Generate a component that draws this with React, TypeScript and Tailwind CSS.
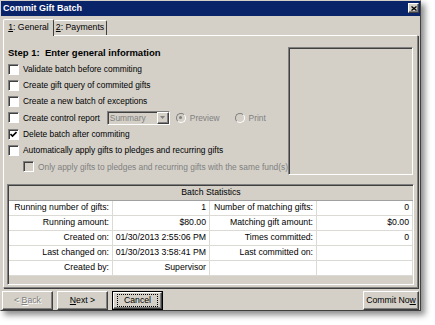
import React from "react";

const raised =
  "border border-t-white border-l-white border-r-[#404040] border-b-[#404040] shadow-[inset_-1px_-1px_0_#808080]";

function CheckBox({ checked, disabled }: { checked?: boolean; disabled?: boolean }) {
  return (
    <span
      className={`inline-flex w-[11px] h-[11px] shrink-0 items-center justify-center border border-t-[#808080] border-l-[#808080] border-r-white border-b-white shadow-[inset_1px_1px_0_#404040] ${
        disabled ? "bg-[#d4d0c8]" : "bg-white"
      }`}
    >
      {checked && (
        <svg width="7" height="7" viewBox="0 0 7 7">
          <path d="M0.5 3 L2.5 5 L6.5 1" stroke="#000" strokeWidth="1.6" fill="none" />
        </svg>
      )}
    </span>
  );
}

function Radio({ selected }: { selected?: boolean }) {
  return (
    <span className="inline-flex w-[10px] h-[10px] shrink-0 items-center justify-center rounded-full border border-t-[#808080] border-l-[#808080] border-r-white border-b-white bg-[#d4d0c8]">
      {selected && <span className="w-[3px] h-[3px] rounded-full bg-[#808080]" />}
    </span>
  );
}

function Row({ children, indent }: { children: React.ReactNode; indent?: boolean }) {
  return (
    <div
      className={`h-[16.3px] flex items-center gap-[4px] whitespace-nowrap ${indent ? "pl-[15px]" : ""}`}
    >
      {children}
    </div>
  );
}

type Stat = [string, string, string, string];

const stats: Stat[] = [
  ["Running number of gifts:", "1", "Number of matching gifts:", "0"],
  ["Running amount:", "$80.00", "Matching gift amount:", "$0.00"],
  ["Created on:", "01/30/2013 2:55:06 PM", "Times committed:", "0"],
  ["Last changed on:", "01/30/2013 3:58:41 PM", "Last committed on:", ""],
  ["Created by:", "Supervisor", "", ""],
];

function Button({
  children,
  width,
  isDefault,
}: {
  children: React.ReactNode;
  width: string;
  isDefault?: boolean;
}) {
  if (isDefault) {
    return (
      <div className={`${width} h-[19px] border border-black`}>
        <div className={`h-full ${raised} flex items-center justify-center text-[8.7px]`}>
          <span className="border border-dotted border-black px-[6px] leading-[11px]">{children}</span>
        </div>
      </div>
    );
  }
  return (
    <div className={`${width} h-[19px] ${raised} flex items-center justify-center text-[8.7px]`}>
      {children}
    </div>
  );
}

export default function App() {
  return (
    <div className="w-[435px] h-[325px] bg-white font-['Liberation_Sans',Arial,sans-serif] text-black">
      <div className="w-[421px] h-[311px] bg-[#d4d0c8] border border-t-[#d4d0c8] border-l-[#d4d0c8] border-r-[#404040] border-b-[#404040] shadow-[4px_4px_6px_rgba(0,0,0,0.45)] flex flex-col">
        {/* title bar */}
        <div className="h-[15px] bg-[#0a246a] flex items-center justify-between pl-[2px] pr-[1px]">
          <span className="text-white font-bold text-[9px]">Commit Gift Batch</span>
          <div className={`w-[11px] h-[10px] bg-[#d4d0c8] ${raised} flex items-center justify-center`}>
            <svg width="6" height="5" viewBox="0 0 6 5">
              <path d="M0.5 0.5 L5.5 4.5 M5.5 0.5 L0.5 4.5" stroke="#000" strokeWidth="1.3" />
            </svg>
          </div>
        </div>

        {/* tabs */}
        <div className="h-[18px] flex items-end pl-[2px] mt-[1px]">
          <div className="h-[17px] w-[51px] border border-b-0 border-t-white border-l-white border-r-[#404040] rounded-t-[2px] flex items-center justify-center text-[8.7px] relative z-10 bg-[#d4d0c8] mb-[-1px]">
            <span><span className="underline">1</span>: General</span>
          </div>
          <div className="h-[15px] w-[53px] border border-b-0 border-t-white border-l-0 border-r-[#404040] rounded-t-[2px] flex items-center justify-center text-[8.7px]">
            <span><span className="underline">2</span>: Payments</span>
          </div>
        </div>

        {/* panel */}
        <div className="mx-[2px] h-[254px] border border-t-white border-l-white border-r-[#808080] border-b-[#808080] shadow-[1px_1px_0_#404040] flex flex-col">
          <div className="mt-[10px] flex">
            <div className="flex-1 min-w-0 pl-[4px] text-[8.4px]">
              <div className="h-[15px] flex items-center font-bold text-[9.5px] whitespace-pre">
                Step 1:  Enter general information
              </div>
              <Row>
                <CheckBox />
                <span>Validate batch before commiting</span>
              </Row>
              <Row>
                <CheckBox />
                <span>Create gift query of commited gifts</span>
              </Row>
              <Row>
                <CheckBox />
                <span>Create a new batch of exceptions</span>
              </Row>
              <Row>
                <CheckBox />
                <span>Create control report</span>
                <div className="ml-[3px] w-[63px] h-[14px] border border-t-[#808080] border-l-[#808080] border-r-white border-b-white shadow-[inset_1px_1px_0_#404040] bg-[#d4d0c8] flex items-center">
                  <span className="flex-1 pl-[2px] text-[#808080]">Summary</span>
                  <div className={`w-[12px] h-[12px] ${raised} flex items-center justify-center`}>
                    <svg width="5" height="3" viewBox="0 0 5 3">
                      <path d="M0 0 H5 L2.5 3 Z" fill="#808080" />
                    </svg>
                  </div>
                </div>
                <span className="ml-[2px] flex items-center gap-[4px] text-[#808080]">
                  <Radio selected />
                  Preview
                </span>
                <span className="ml-[11px] flex items-center gap-[4px] text-[#808080]">
                  <Radio />
                  Print
                </span>
              </Row>
              <Row>
                <CheckBox checked />
                <span>Delete batch after commiting</span>
              </Row>
              <Row>
                <CheckBox />
                <span>Automatically apply gifts to pledges and recurring gifts</span>
              </Row>
              <Row indent>
                <CheckBox disabled />
                <span className="text-[#808080]">
                  Only apply gifts to pledges and recurring gifts with the same fund(s)
                </span>
              </Row>
            </div>
            <div className="w-[125px] h-[128px] shrink-0 mr-[4px] mt-[1px] border border-t-[#808080] border-l-[#808080] border-r-white border-b-white shadow-[inset_1px_1px_0_#404040]" />
          </div>

          {/* batch statistics */}
          <div className="mt-[9px] ml-[3px] w-[407px] h-[101px] border border-t-[#808080] border-l-[#808080] border-r-white border-b-white shadow-[inset_1px_1px_0_#404040] flex flex-col pl-[1px] pt-[1px] text-[8.7px]">
            <div className="h-[15px] flex items-center justify-center border-b border-[#a0a0a0] bg-[#d4d0c8]">
              Batch Statistics
            </div>
            <div className="bg-white">
              {stats.map((r, i) => (
                <div
                  key={i}
                  className="grid grid-cols-[104px_97px_107px_1fr] h-[15px] border-b border-[#dcdad5]"
                >
                  {r.map((c, j) => (
                    <div
                      key={j}
                      className="flex items-center justify-end pr-[3px] border-r border-[#dcdad5] whitespace-nowrap"
                    >
                      {c}
                    </div>
                  ))}
                </div>
              ))}
            </div>
            <div className="flex-1 bg-[#d4d0c8]" />
          </div>
        </div>

        {/* buttons */}
        <div className="mt-[3px] flex items-center pl-[1px] pr-[1px]">
          <Button width="w-[51px]">
            <span className="text-[#808080] [text-shadow:1px_1px_0_#fff]">
              &lt; <span className="underline">B</span>ack
            </span>
          </Button>
          <div className="ml-[4px]">
            <Button width="w-[51px]">
              <span>
                <span className="underline">N</span>ext &gt;
              </span>
            </Button>
          </div>
          <div className="ml-[4px]">
            <Button width="w-[51px]" isDefault>
              Cancel
            </Button>
          </div>
          <div className="ml-auto">
            <Button width="w-[56px]">
              <span>
                Commit No<span className="underline">w</span>
              </span>
            </Button>
          </div>
        </div>
      </div>
    </div>
  );
}
